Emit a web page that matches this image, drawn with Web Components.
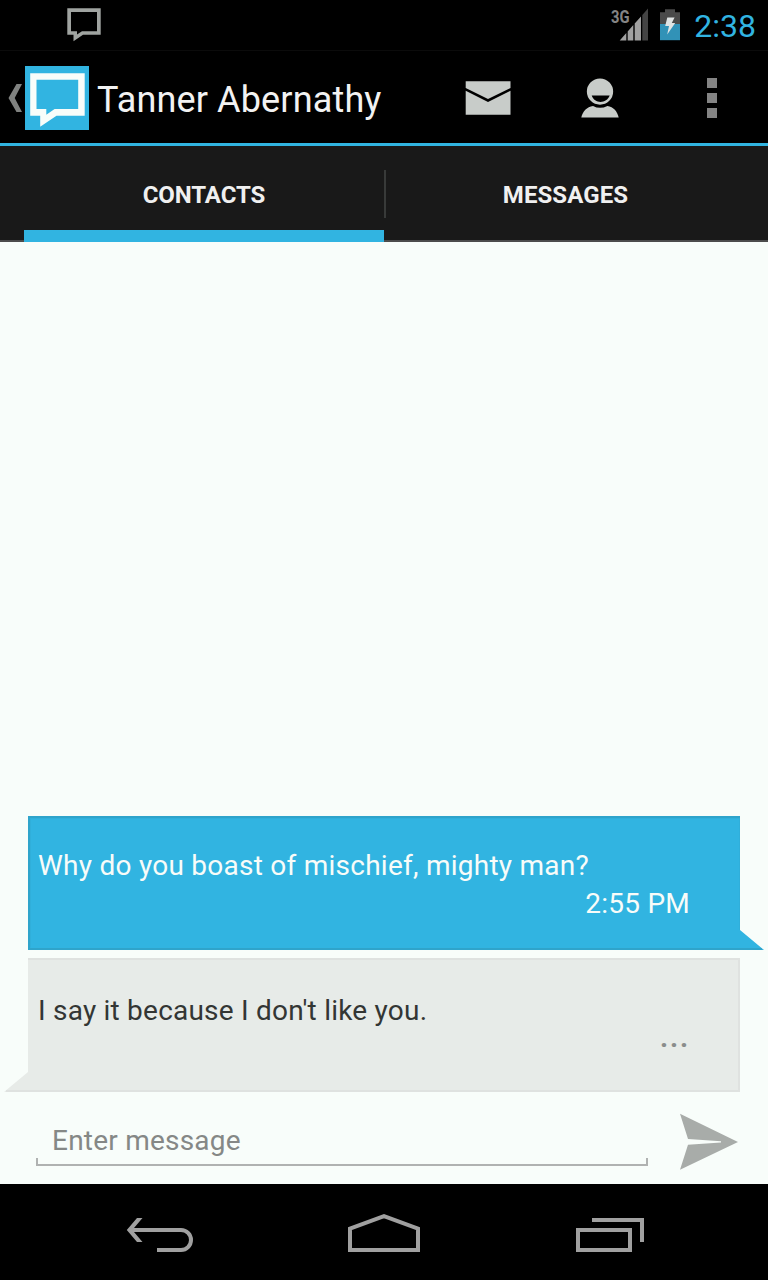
<!DOCTYPE html>
<html lang="en">
<head>
<meta charset="utf-8">
<title>Messaging</title>
<style>
html,body{margin:0;padding:0;background:#000}
body{font-family:Roboto,"Liberation Sans",sans-serif}
</style>
</head>
<body>
<chat-app></chat-app>
<script>
const define = (name, html) => customElements.define(name, class extends HTMLElement {
  constructor() {
    super();
    const t = document.createElement('template');
    t.innerHTML = html;
    this.attachShadow({mode: 'open'}).append(t.content.cloneNode(true));
  }
});

define('status-bar', `
<style>
:host{display:flex;box-sizing:border-box;height:51px;border-bottom:1px solid #0b0b0b;background:#000;padding:0 12px 0 67px;align-items:flex-start}
svg{display:block;flex:none}
.space{flex:1}
.net{position:relative;width:37px;height:50px;margin-right:12px}
.net span{position:absolute;left:0;top:7px;font:bold 18px/20px Roboto,sans-serif;color:#848484;transform:scaleX(.82);transform-origin:0 0}
.clock{font-size:32px;line-height:52px;color:#31b4e1;margin-left:14px;white-space:nowrap}
</style>
<svg width="35" height="50" viewBox="67 0 35 50"><path fill="#a0a4a1" fill-rule="evenodd" d="M67.3 8.3H100.7V34.7H83L73.5 41.3V34.7H67.3ZM71 12V31.3H77V34.6L82 31.3H97V12Z"/></svg>
<div class="space"></div>
<div class="net"><span>3G</span>
<svg width="37" height="50" viewBox="611 0 37 50"><path fill="#a0a0a0" d="M619.7 40.4L626.3 33V40.4ZM627.7 40.4V31.4L633.3 25V40.4ZM634.7 40.4V23.6L641 16.4V40.4Z"/><path fill="#444" d="M642.3 40.4V15L648 8.6V40.4Z"/></svg></div>
<svg width="20" height="50" viewBox="660 0 20 50"><path fill="#4a4a4a" d="M665 9.3H675V12.3H680V25H660V12.3H665Z"/><path fill="#3192b7" d="M660 24H680V40.2H660Z"/><path fill="#e0e4e4" d="M667.3 17.6H674.6L671.8 23H675.2L667.2 34.6L669 26H665.2Z"/></svg>
<span class="clock">2:38</span>`);

define('action-bar', `
<style>
:host{display:flex;box-sizing:border-box;height:95px;background:#000;border-bottom:3px solid #31b4e1;align-items:center;padding:2px 0 0 8px}
svg{display:block;flex:none}
.title{font-size:36px;line-height:48px;letter-spacing:.15px;color:#f2f2f2;margin-left:8px;white-space:nowrap;flex:1;padding:3px 0 0}
.act{width:112px;display:flex;justify-content:center}
</style>
<svg width="17" height="32" viewBox="8 82 17 32"><path fill="#808280" d="M16.5 84H22L14.7 98L22 112H16.5L8.5 98Z"/></svg>
<svg width="64" height="64"><rect width="64" height="64" fill="#31b4e1"/><path fill="#f8fdfa" fill-rule="evenodd" d="M5.2 7.3H59.7V49.7H31.5L15.2 60.7V49.7H5.2ZM11.5 13.7V43H21.3V48.7L29.6 43H53.2V13.7Z"/></svg>
<span class="title"><slot></slot></span>
<div class="act"><svg width="46" height="36" viewBox="465 80 46 36"><path fill="#c8ccc9" d="M465.7 81.2H510.5V88L488 99L465.7 88ZM465.7 90.8L488 102L510.5 90.8V114.8H465.7Z"/></svg></div>
<div class="act"><svg width="40" height="42" viewBox="580 77 40 42"><path fill="#c8ccc9" fill-rule="evenodd" d="M600 78.4A13.1 13.1 0 0 1 600 104.7A13.1 13.1 0 0 1 600 78.4ZM591.7 95.5C594.5 104 606.5 104 609.7 95.5Z"/><path fill="#c8ccc9" d="M581.3 117.6C582.4 111.5 587 106.6 593 105.9Q600 109.7 607.4 105.9C613.5 106.6 617.5 111.5 618.7 117.6Z"/></svg></div>
<div class="act"><svg width="10" height="40"><path fill="#848484" d="M0 0H10V10H0ZM0 15H10V25H0ZM0 30H10V40H0Z"/></svg></div>`);

define('tab-item', `
<style>
:host{display:flex;box-sizing:border-box;width:360px;height:96px;align-items:center;justify-content:center;font-size:24px;font-weight:bold;color:#f0f0f0;padding:1px 0 0 3px;letter-spacing:.1px}
:host([active]){border-bottom:12px solid #31b4e1;padding:13px 0 0;letter-spacing:-.08px}
</style><slot></slot>`);

define('tab-bar', `
<style>
:host{display:flex;box-sizing:border-box;height:96px;padding:0 24px;background:linear-gradient(#4c4c4c,#4c4c4c) 0 100%/100% 2px no-repeat #191919;align-items:flex-start}
i{width:2px;height:48px;margin:24px -2px 0 0;background:#383a39}
</style>
<tab-item active>CONTACTS</tab-item><i></i><tab-item>MESSAGES</tab-item>`);

define('chat-bubble', `
<style>
:host{display:block;position:relative;box-sizing:border-box;height:134px;margin:0 28px;padding:31px 50px 0 10px;font-size:28px;line-height:38px;letter-spacing:.25px;color:#f8fcf9}
:host([incoming]){padding-top:34px;color:#333634;letter-spacing:.22px}
svg{position:absolute;left:-24px;top:0}
.in,:host([incoming]) .out{display:none}
:host([incoming]) .in{display:block}
.body,.meta{position:relative;white-space:nowrap}
.meta{text-align:right}
:host([incoming]) .meta{color:#8a8d8b;line-height:16px;font-weight:bold;letter-spacing:1.9px}
</style>
<svg class="out" width="760" height="134"><path fill="#31b4e1" d="M24 0H736V114L760 134H24Z"/><path fill="none" stroke="#2f90b2" stroke-opacity=".45" stroke-width="2" d="M758 133H25V1H736"/><path fill="none" stroke="#2f90b2" stroke-opacity=".13" d="M26.5 131.5V2.5H735.5V114"/></svg>
<svg class="in" width="760" height="134"><path fill="#e7ebe8" d="M24 0H736V134H0L24 114Z"/><path fill="none" stroke="#dfe2e0" stroke-width="2" d="M24 1H735V133H2"/></svg>
<div class="body"><slot></slot></div><div class="meta"><slot name="meta"></slot></div>`);

define('message-composer', `
<style>
:host{display:flex;height:92px;padding:0 30px 0 36px;align-items:flex-start;justify-content:space-between}
.field{box-sizing:border-box;width:612px;height:74px;padding:30px 16px 0;font-size:28px;line-height:38px;letter-spacing:.22px;color:#858886;background:linear-gradient(#b0b2b1,#b0b2b1) 0 100%/100% 2px no-repeat,linear-gradient(#b0b2b1,#b0b2b1) 0 100%/2px 8px no-repeat,linear-gradient(#b0b2b1,#b0b2b1) 100% 100%/2px 8px no-repeat}
svg{display:block;margin-top:21px}
</style>
<div class="field">Enter message</div>
<svg width="59" height="58" viewBox="679 1113 59 58"><path fill="#a8aca9" d="M680 1113.8L738 1142L680 1169.8L688 1144.8L721 1142.6V1141.2L688 1139Z"/></svg>`);

define('nav-bar', `
<style>
:host{display:flex;height:96px;background:#000;padding:0 124px 0 126px;align-items:flex-start;box-sizing:border-box}
svg{display:block;flex:none;margin-top:28px}
path{fill:none;stroke:#a0a0a0;stroke-width:4}
.f{fill:#a0a0a0;stroke:none}
.home{margin-left:153px;margin-right:155px}
</style>
<svg width="68" height="42" viewBox="126 1212 68 42"><path d="M130 1230H181A10 10 0 0 1 181 1250H157"/><path class="f" d="M142.5 1218H137L126.8 1230L137 1242H142.5L132.3 1230Z"/></svg>
<svg class="home" width="74" height="42" viewBox="347 1212 74 42"><path d="M350 1228.7L384 1216.2L418 1228.7V1250H350Z"/></svg>
<svg width="68" height="42" viewBox="576 1212 68 42"><path d="M578 1230H630V1250H578ZM592 1220H642V1242"/></svg>`);

define('chat-app', `
<style>
:host{display:flex;flex-direction:column;width:768px;height:1280px;background:#f8fdfa;overflow:hidden}
main{flex:1;display:flex;flex-direction:column;justify-content:flex-end;gap:8px}
</style>
<status-bar></status-bar>
<action-bar>Tanner Abernathy</action-bar>
<tab-bar></tab-bar>
<main>
<chat-bubble>Why do you boast of mischief, mighty man?<span slot="meta">2:55 PM</span></chat-bubble>
<chat-bubble incoming>I say it because I don't like you.<span slot="meta">...</span></chat-bubble>
</main>
<message-composer></message-composer>
<nav-bar></nav-bar>`);
</script>
</body>
</html>
